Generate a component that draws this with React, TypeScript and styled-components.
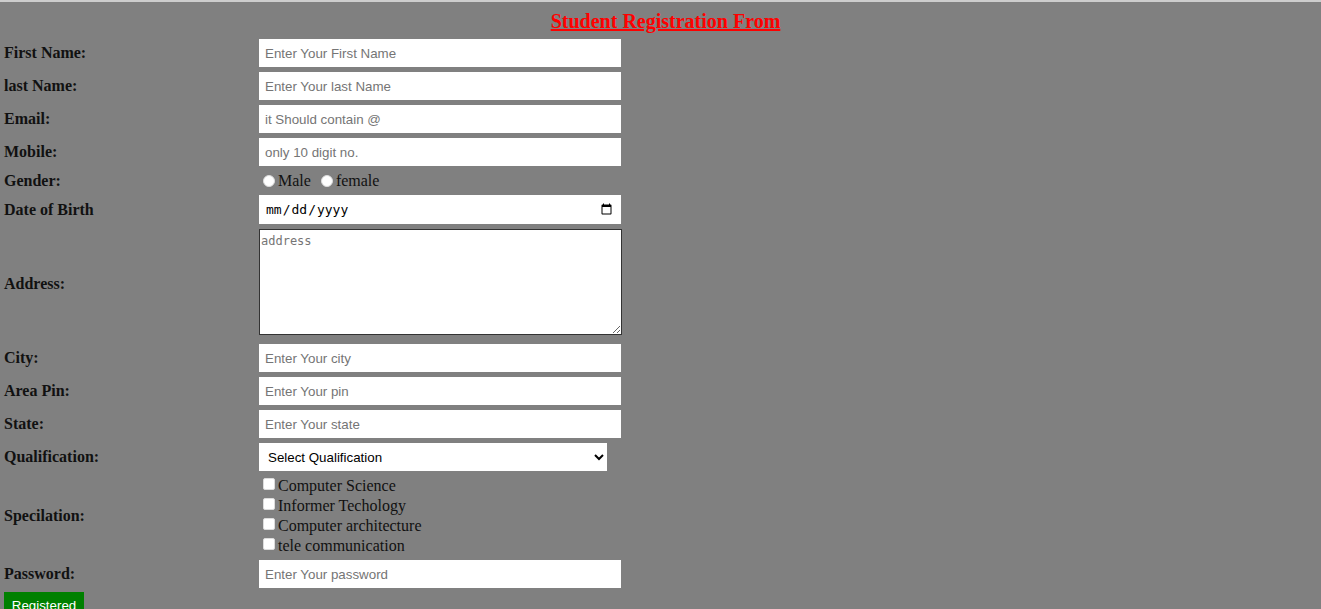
import {FC, Fragment} from "react";
import styled, {createGlobalStyle} from "styled-components";

const GlobalStyle = createGlobalStyle`
  html, body {
    margin: 0;
    padding: 0;
    background: #808080;
  }
  body {
    border-top: 2px solid #cdcdcd;
    font-family: "Liberation Serif", "Times New Roman", serif;
  }
`

const FormPage = styled.form`
  padding: 8px 0 0 4px;
  height: 607px;
  box-sizing: border-box;
  overflow: hidden;
`

const Title = styled.h1`
  margin: 0 0 6px;
  padding-left: 6px;
  text-align: center;
  font-size: 20px;
  line-height: 23px;
  font-weight: bold;
  color: #ff0000;
  text-decoration: underline;
`

const FieldGrid = styled.div`
  display: grid;
  grid-template-columns: 255px 362px;
  row-gap: 5px;
  align-items: center;
`

const Label = styled.label`
  font-size: 16px;
  font-weight: bold;
  color: #111;
`

const TextInput = styled.input`
  box-sizing: border-box;
  width: 362px;
  height: 28px;
  border: none;
  outline: none;
  padding: 0 6px;
  background: #fff;
  font-family: "Liberation Sans", Arial, sans-serif;
  font-size: 13.33px;
  color: #000;
  &::placeholder {
    color: #757575;
  }
`

const DateInput = styled(TextInput)`
  height: 29px;
  font-family: "DejaVu Sans Mono", "Liberation Mono", monospace;
  font-size: 13px;
`

const AddressBox = styled.textarea`
  box-sizing: border-box;
  display: block;
  width: 363px;
  height: 106px;
  margin-bottom: 4px;
  border: 1px solid #333;
  padding: 4px 1px;
  background: #fff;
  font-family: "DejaVu Sans Mono", "Liberation Mono", monospace;
  font-size: 12px;
  &::placeholder {
    color: #757575;
  }
`

const ChoiceRow = styled.div`
  display: flex;
  align-items: center;
  height: 19px;
  font-size: 16px;
  color: #111;
`

const Radio = styled.input<{$gap?: number}>`
  appearance: none;
  width: 12px;
  height: 12px;
  margin: 0 3px 0 ${p => p.$gap ?? 4}px;
  border-radius: 50%;
  border: 1px solid #dcdcdc;
  background: #fff;
`

const CheckList = styled.div`
  display: flex;
  flex-direction: column;
`

const CheckLine = styled.label`
  display: flex;
  align-items: center;
  height: 20px;
  font-size: 16px;
  color: #111;
  &:last-child {
    height: 19px;
  }
`

const CheckBox = styled.input`
  appearance: none;
  width: 12px;
  height: 12px;
  margin: -4px 3px 0 4px;
  border-radius: 2px;
  border: 1px solid #dcdcdc;
  background: #fff;
`

const QualSelect = styled.select`
  width: 348px;
  height: 28px;
  border: none;
  outline: none;
  padding: 0 5px;
  background: #fff;
  font-family: "Liberation Sans", Arial, sans-serif;
  font-size: 13.33px;
  color: #000;
`

const SubmitButton = styled.button`
  margin-top: 4px;
  width: 80px;
  height: 26px;
  border: none;
  background: #008000;
  color: #fff;
  font-family: "Liberation Sans", Arial, sans-serif;
  font-size: 13.33px;
  padding: 0;
`

const textFields = [
    {label: "First Name:", placeholder: "Enter Your First Name"},
    {label: "last Name:", placeholder: "Enter Your last Name"},
    {label: "Email:", placeholder: "it Should contain @"},
    {label: "Mobile:", placeholder: "only 10 digit no."},
]

const placeFields = [
    {label: "City:", placeholder: "Enter Your city"},
    {label: "Area Pin:", placeholder: "Enter Your pin"},
    {label: "State:", placeholder: "Enter Your state"},
]

const specs = ["Computer Science", "Informer Techology", "Computer architecture", "tele communication"]

const App: FC = () => {
    return (
        <>
            <GlobalStyle/>
            <FormPage onSubmit={e => e.preventDefault()}>
                <Title>Student Registration From</Title>
                <FieldGrid>
                    {textFields.map(f => (
                        <Fragment key={f.label}>
                            <Label>{f.label}</Label>
                            <TextInput type="text" placeholder={f.placeholder}/>
                        </Fragment>
                    ))}
                    <Label>Gender:</Label>
                    <ChoiceRow>
                        <Radio type="radio" name="gender"/>Male
                        <Radio type="radio" name="gender" $gap={10}/>female
                    </ChoiceRow>
                    <Label>Date of Birth</Label>
                    <DateInput type="date"/>
                    <Label>Address:</Label>
                    <AddressBox placeholder="address"/>
                    {placeFields.map(f => (
                        <Fragment key={f.label}>
                            <Label>{f.label}</Label>
                            <TextInput type="text" placeholder={f.placeholder}/>
                        </Fragment>
                    ))}
                    <Label>Qualification:</Label>
                    <QualSelect defaultValue="">
                        <option value="">Select Qualification</option>
                        <option>B.Tech</option>
                        <option>M.Tech</option>
                    </QualSelect>
                    <Label>Specilation:</Label>
                    <CheckList>
                        {specs.map(s => (
                            <CheckLine key={s}>
                                <CheckBox type="checkbox"/>{s}
                            </CheckLine>
                        ))}
                    </CheckList>
                    <Label>Password:</Label>
                    <TextInput type="password" placeholder="Enter Your password"/>
                </FieldGrid>
                <SubmitButton type="submit">Registered</SubmitButton>
            </FormPage>
        </>
    )
};

export default App
